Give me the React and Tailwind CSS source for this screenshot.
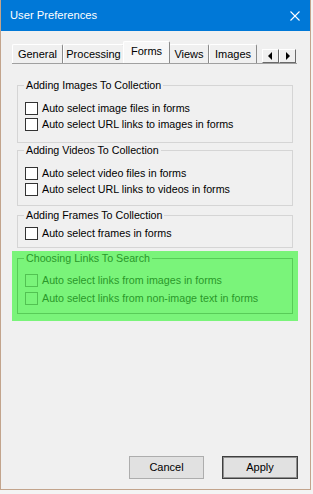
import React from 'react';

function Check({ label, green, tall }) {
  return (
    <div className={`flex items-center pl-[7px] ${tall ? 'h-[18px]' : 'h-[16px]'}`}>
      <span
        className={`w-[13px] h-[13px] border shrink-0 ${
          green ? 'border-[#52c252] bg-[#7af47a]' : 'border-[#333333] bg-white'
        }`}
      />
      <span className={`ml-[4px] whitespace-nowrap ${green ? 'text-[#2a982a]' : 'text-black'}`}>{label}</span>
    </div>
  );
}

function Group({ title, green, className, children }) {
  return (
    <div className={`relative border ${green ? 'border-[#58cc58]' : 'border-[#d5d5d5]'} ${className}`}>
      <span
        className={`absolute -top-[8px] left-[6px] px-[2px] leading-[14px] whitespace-nowrap ${
          green ? 'bg-[#7af47a] text-[#2a982a]' : 'bg-[#f0f0f0] text-black'
        }`}
      >
        {title}
      </span>
      {children}
    </div>
  );
}

function Tab({ label, width, selected }) {
  if (selected) {
    return (
      <div
        className={`${width} h-[22px] -mx-[1px] z-10 flex items-center justify-center bg-[#f7f7f7] border-t border-l border-white border-r border-r-[#8a8a8a] rounded-t-[2px]`}
      >
        <span className="-mt-[2px]">{label}</span>
      </div>
    );
  }
  return (
    <div
      className={`${width} h-[19px] flex items-center justify-center bg-[#f0f0f0] border-t border-l border-white border-r border-r-[#8a8a8a] rounded-t-[2px]`}
    >
      <span>{label}</span>
    </div>
  );
}

function ArrowButton({ dir }) {
  return (
    <div className="w-[17px] h-[14px] flex items-center justify-center bg-[#f0f0f0] border-t border-l border-white border-r border-b border-r-[#6a6a6a] border-b-[#6a6a6a]">
      <svg width="5" height="8" viewBox="0 0 5 8">
        {dir === 'left' ? <polygon points="4,0 0,4 4,8" fill="#000" /> : <polygon points="1,0 5,4 1,8" fill="#000" />}
      </svg>
    </div>
  );
}

export default function App() {
  return (
    <div className="w-[313px] h-[494px] bg-[#f4f4f4] font-['Liberation_Sans',Arial,sans-serif] text-[10.7px] text-black">
      <div className="w-[311px] h-[490px] flex flex-col border-x border-b border-[#c2a48c] bg-[#f0f0f0]">
        {/* Title bar */}
        <div className="h-[31px] shrink-0 bg-[#0078d7] flex items-center justify-between pl-[9px] pr-[10px]">
          <span className="text-white text-[11.2px]">User Preferences</span>
          <svg width="10" height="10" viewBox="0 0 10 10" className="mt-[1px]">
            <line x1="0.5" y1="0.5" x2="9.5" y2="9.5" stroke="#fff" strokeWidth="1.1" />
            <line x1="9.5" y1="0.5" x2="0.5" y2="9.5" stroke="#fff" strokeWidth="1.1" />
          </svg>
        </div>

        {/* Body */}
        <div className="flex-1 flex flex-col">
          {/* Tabs */}
          <div className="mt-[10px] ml-[11px] w-[285px] h-[23px] flex items-end border-b border-[#a0a0a0] text-[11px]">
            <Tab label="General" width="w-[51px]" />
            <Tab label="Processing" width="w-[61px]" />
            <Tab label="Forms" width="w-[47px]" selected />
            <Tab label="Views" width="w-[40px]" />
            <Tab label="Images" width="w-[48px]" />
            <div className="ml-[5px] flex">
              <ArrowButton dir="left" />
              <ArrowButton dir="right" />
            </div>
          </div>

          <Group title="Adding Images To Collection" className="mt-[21px] ml-[16px] w-[276px] h-[58px] pt-[14px]">
            <Check label="Auto select image files in forms" />
            <Check label="Auto select URL links to images in forms" />
          </Group>

          <Group title="Adding Videos To Collection" className="mt-[7px] ml-[16px] w-[276px] h-[56px] pt-[14px]">
            <Check label="Auto select video files in forms" />
            <Check label="Auto select URL links to videos in forms" />
          </Group>

          <Group title="Adding Frames To Collection" className="mt-[9px] ml-[16px] w-[276px] h-[33px] pt-[9px]">
            <Check label="Auto select frames in forms" />
          </Group>

          <div className="mt-[3px] ml-[11px] w-[286px] h-[70px] bg-[#7af47a] pt-[7px] pl-[5px]">
            <Group title="Choosing Links To Search" green className="w-[276px] h-[56px] pt-[12px]">
              <Check label="Auto select links from images in forms" green tall />
              <Check label="Auto select links from non-image text in forms" green tall />
            </Group>
          </div>

          {/* Buttons */}
          <div className="mt-auto mb-[10px] pr-[12px] flex justify-end gap-[18px] text-[11px]">
            <button className="w-[75px] h-[23px] bg-[#e1e1e1] border border-[#adadad] text-black">Cancel</button>
            <button className="w-[76px] h-[23px] bg-[#e1e1e1] border border-[#3f3f3f] shadow-[inset_0_0_0_1px_#8f8f8f] text-black">
              Apply
            </button>
          </div>
        </div>
      </div>
    </div>
  );
}
